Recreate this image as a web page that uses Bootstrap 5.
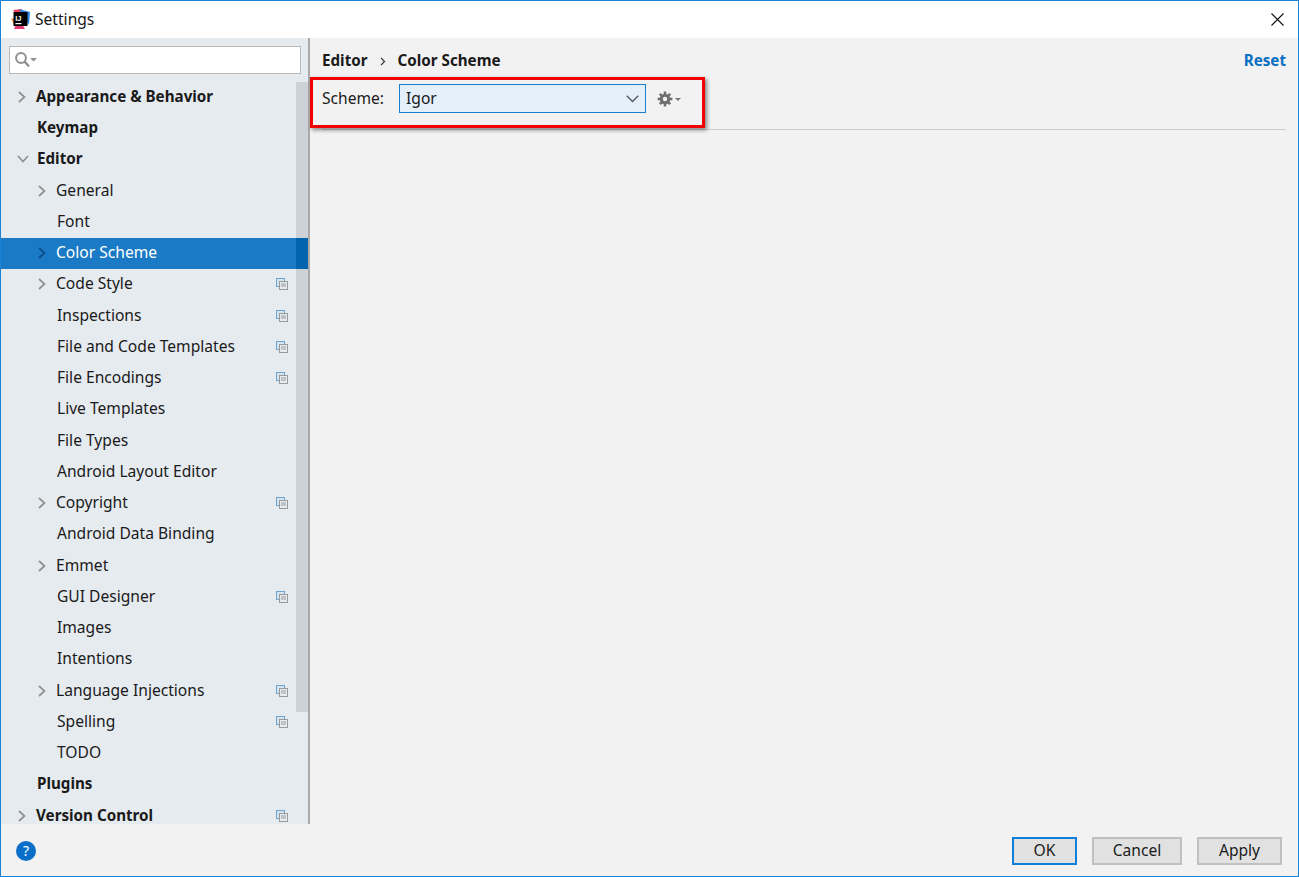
<!DOCTYPE html>
<html lang="en">
<head>
<meta charset="utf-8">
<title>Settings</title>
<link href="https://cdn.jsdelivr.net/npm/bootstrap@5.3.0/dist/css/bootstrap.min.css" rel="stylesheet">
<style>
html,body{height:100%;margin:0;overflow:hidden}
body{font-family:"Noto Sans","Open Sans",sans-serif;font-size:15.6px;color:#1a1a1a;background:#f2f2f2}
.win{height:877px;border:1px solid #1883d7;background:#f2f2f2}
.titlebar{height:37px;background:#fff;flex:none}
.titlebar .ttl{margin-left:4px;line-height:37px}
.logo{margin-left:9px}
.xbtn{margin-right:14px}
.mid{height:786px;min-height:0}
.side{width:307px;background:#e6ebf0;flex:none;position:relative;overflow:hidden}
.split{width:2px;background:#a9a9a9;flex:none}
.srch{height:28px;margin:8px 7px 7.9px 8px;width:292px;background:#fff;border:1px solid #b9b9b9;padding-left:5px}
.tree{height:742.1px;overflow:hidden;position:relative}
.sbar{position:absolute;right:0;top:44px;width:12px;height:630px;background:#ccd2d7}
.trow{height:31.25px;line-height:29.2px;position:relative;white-space:nowrap;padding-left:55px;padding-right:12px}
.trow.top{padding-left:35px;font-weight:700;font-size:15.2px}
.trow.nochev{padding-left:56px}
.trow.top.nochev{padding-left:36px}
.trow.sel{background:#1b7ac5;color:#fff}
.trow.sel::after{content:"";position:absolute;right:0;top:0;width:12px;height:100%;background:#0364ae}
.chev{position:absolute;left:37px;top:9px}
.trow.top .chev{left:17px}
.copyic{position:absolute;right:20px;top:9px}
.main{min-width:0;padding:0 12px 0 12px;position:relative}
.crumbs{height:44px;font-weight:700;font-size:15.2px}
.crumbs .sep{margin:0 12px 0 12px;font-weight:400}
.rst{color:#0a6fc2;font-weight:700;text-decoration:none}
.schrow{height:33px}
.combo{width:247px;height:29px;margin-left:15px;background:#e3eff9;border:1px solid #1a7fd0;padding:0 6px;line-height:27px}
.gear{margin-left:11px}
.rule{border-top:1px solid #cdcdcd;margin-top:14px}
.hilite{position:absolute;left:0;top:39px;width:395px;height:51px;border:3px solid #f20000;box-shadow:2px 2px 4px rgba(0,0,0,.45);pointer-events:none}
.foot{flex:1 1 auto;padding-top:2px}
.qmark{width:20px;height:20px;border-radius:50%;background:#0b6fc9;color:#fff;font-size:14px;line-height:20px;text-align:center;margin-left:15px}
.dbtn{height:28px;font-size:15.6px;line-height:22px;padding:0 0 2px;border:2px solid #c0c0c0;background:#e1e1e1;color:#1a1a1a;border-radius:0}
.dbtn:hover{background:#e1e1e1}
.dbtn.def{border-color:#0f7fdc;width:65px;margin-right:15px}
.dbtn.cnl{width:90px;margin-right:15px}
.dbtn.apl{width:85px;margin-right:16px}
</style>
</head>
<body>
<div class="win d-flex flex-column">
  <div class="titlebar d-flex align-items-center">
    <svg class="logo" width="21" height="21" viewBox="0 0 21 21">
      <path d="M3 1 L12 0 L9 9 Z" fill="#f0405f"/><path d="M1 9 L5 18 L10 12 Z" fill="#fb8c2a"/><path d="M9 0 L20 3 L19 16 Z" fill="#2e82e8"/><path d="M4 20 L15 20 L9 10 Z" fill="#e83a72"/>
      <rect x="3.5" y="3" width="14" height="14" fill="#000"/>
      <rect x="5.5" y="14" width="6" height="1.2" fill="#fff"/>
      <text x="5.2" y="11.5" fill="#fff" font-size="7.5" font-weight="700" font-family="Liberation Sans, sans-serif">IJ</text>
    </svg>
    <span class="ttl flex-grow-1">Settings</span>
    <svg class="xbtn" width="13" height="13" viewBox="0 0 13 13"><path d="M.5.5l12 12M12.5.5l-12 12" stroke="#111" stroke-width="1.1" fill="none"/></svg>
  </div>
  <div class="mid d-flex">
    <div class="side">
      <div class="srch d-flex align-items-center">
        <svg width="22" height="16" viewBox="0 0 22 16"><circle cx="6" cy="6" r="4.9" fill="none" stroke="#8f8f8f" stroke-width="2"/><path d="M9.5 9.5l4.5 5" stroke="#8f8f8f" stroke-width="2.4"/><path d="M15 6h7l-3.5 3.6z" fill="#8f8f8f"/></svg>
      </div>
      <div class="sbar"></div>
      <div class="tree" id="tree"></div>
    </div>
    <div class="split"></div>
    <div class="main flex-grow-1">
      <div class="crumbs d-flex align-items-center justify-content-between">
        <div><span>Editor</span><span class="sep"><svg width="6" height="9" viewBox="0 0 6 9"><path d="M1 .8l3.5 3.7L1 8.2" fill="none" stroke="#333" stroke-width="1.2"/></svg></span><span>Color Scheme</span></div>
        <a class="rst" href="#">Reset</a>
      </div>
      <div class="schrow d-flex align-items-center">
        <span>Scheme:</span>
        <div class="combo d-flex align-items-center justify-content-between">
          <span>Igor</span>
          <svg width="13" height="8" viewBox="0 0 13 8"><path d="M.8.8l5.7 5.7L12.2.8" fill="none" stroke="#555" stroke-width="1.3"/></svg>
        </div>
        <svg class="gear" width="25" height="16" viewBox="0 0 25 16">
          <g fill="#6e6e6e"><circle cx="8" cy="8" r="5.3"/><g stroke="#6e6e6e" stroke-width="2.6"><path d="M8 .6v14.8M.6 8h14.8M2.8 2.8l10.4 10.4M13.2 2.8L2.8 13.2"/></g></g><circle cx="8" cy="8" r="2.2" fill="#f2f2f2"/><path d="M18 7h6l-3 3z" fill="#777"/>
        </svg>
      </div>
      <div class="rule"></div>
      <div class="hilite"></div>
    </div>
  </div>
  <div class="foot d-flex align-items-center justify-content-between">
    <div class="qmark">?</div>
    <div class="d-flex">
      <button class="btn dbtn def">OK</button>
      <button class="btn dbtn cnl">Cancel</button>
      <button class="btn dbtn apl">Apply</button>
    </div>
  </div>
</div>
<script>
var rows=[
["Appearance & Behavior",1,1,0],["Keymap",1,0,0],["Editor",1,2,0],["General",0,1,0],["Font",0,0,0],["Color Scheme",0,1,0,1],["Code Style",0,1,1],["Inspections",0,0,1],["File and Code Templates",0,0,1],["File Encodings",0,0,1],["Live Templates",0,0,0],["File Types",0,0,0],["Android Layout Editor",0,0,0],["Copyright",0,1,1],["Android Data Binding",0,0,0],["Emmet",0,1,0],["GUI Designer",0,0,1],["Images",0,0,0],["Intentions",0,0,0],["Language Injections",0,1,1],["Spelling",0,0,1],["TODO",0,0,0],["Plugins",1,0,0],["Version Control",1,1,1]];
var h="";
rows.forEach(function(r){
 var c="trow"+(r[1]?" top":"")+(r[2]==1?"":" nochev")+(r[4]?" sel":"");
 var col=r[4]?"#0b4d85":"#8f8f8f";
 var ch=r[2]==1?'<svg class="chev" width="8" height="12" viewBox="0 0 8 12"><path d="M1 1l5.5 5L1 11" fill="none" stroke="'+col+'" stroke-width="1.7"/></svg>':r[2]==2?'<svg class="chev" width="12" height="8" viewBox="0 0 12 8" style="top:11px;left:16px"><path d="M1 1l5 5.5L11 1" fill="none" stroke="'+col+'" stroke-width="1.7"/></svg>':'';
 var cp=r[3]?'<svg class="copyic" width="12" height="12" viewBox="0 0 12 12"><rect x=".5" y=".5" width="8" height="8" fill="#d5e3ef" stroke="#6fa4cf"/><rect x="3.5" y="3.5" width="8" height="8" fill="#e6ebf0" stroke="#9a9a9a"/><path d="M5 6h5M5 8h5" stroke="#9a9a9a"/></svg>':'';
 var t=r[0].replace("&","&amp;");
 h+='<div class="'+c+'">'+ch+'<span>'+t+'</span>'+cp+'</div>';
});
document.getElementById("tree").innerHTML=h;
</script>
<script src="https://cdn.jsdelivr.net/npm/bootstrap@5.3.0/dist/js/bootstrap.bundle.min.js"></script>
</body>
</html>
